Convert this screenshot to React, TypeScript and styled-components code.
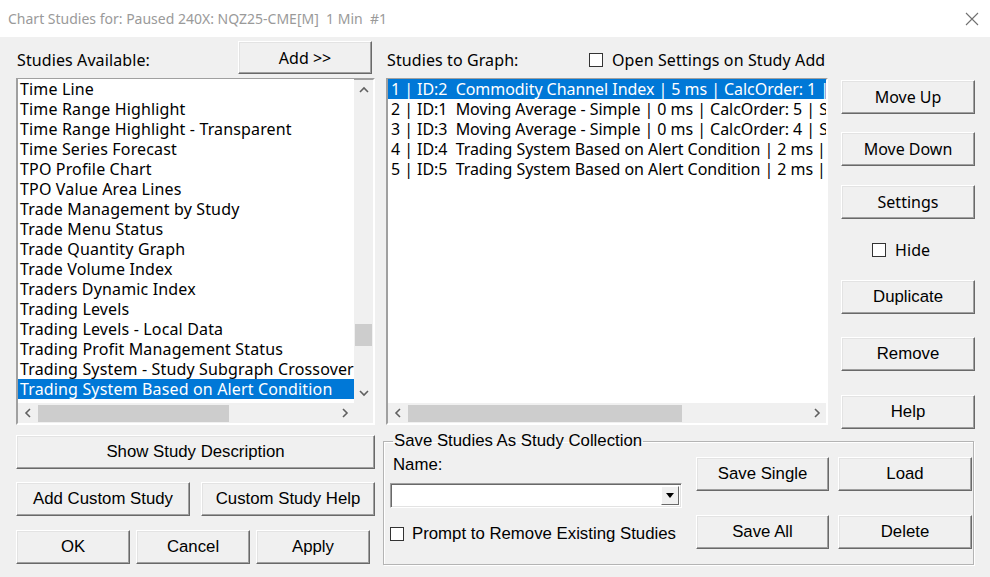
import React from "react";
import styled, { createGlobalStyle } from "styled-components";

const UI = `"Noto Sans", "Open Sans", sans-serif`;
const ARIAL = `"Liberation Sans", Arial, sans-serif`;

const GlobalStyle = createGlobalStyle`
  html, body {
    margin: 0;
    padding: 0;
    background: #f0f0f0;
  }
  * {
    box-sizing: border-box;
  }
`;

const Window = styled.div`
  width: 990px;
  height: 577px;
  background: #f0f0f0;
  font-family: ${UI};
  color: #000;
  overflow: hidden;
`;

const TitleBar = styled.div`
  height: 37px;
  background: #fff;
  display: flex;
  align-items: center;
  justify-content: space-between;
  padding: 0 11px 0 8px;
`;

const Title = styled.div`
  font-size: 14px;
  color: #9a9a9a;
  white-space: pre;
`;

const Body = styled.div`
  padding: 4px 0 0 16px;
`;

const TopRow = styled.div`
  display: flex;
  height: 388px;
`;

const Pane = styled.div<{ $width: number; $left?: number }>`
  width: ${(p) => p.$width}px;
  margin-left: ${(p) => p.$left ?? 0}px;
  display: flex;
  flex-direction: column;
`;

const PaneHeader = styled.div`
  height: 37px;
  display: flex;
  align-items: center;
`;

const MidHeader = styled.div`
  height: 37px;
  display: grid;
  grid-template-columns: 203px 1fr;
  align-items: center;
`;

const Label = styled.span`
  font-family: ${UI};
  font-size: 16px;
  letter-spacing: 0.1px;
  white-space: nowrap;
  padding-left: 1px;
`;

const Button = styled.button<{ $w?: number; $h?: number; $font?: string }>`
  width: ${(p) => (p.$w ? `${p.$w}px` : "100%")};
  height: ${(p) => p.$h ?? 34}px;
  flex-shrink: 0;
  background: #f0f0f0;
  border: 1px solid;
  border-color: #fff #696969 #696969 #fff;
  box-shadow: inset -1px -1px #a0a0a0, inset 1px 1px #e3e3e3;
  font-family: ${(p) => p.$font ?? UI};
  font-size: ${(p) => (p.$font === ARIAL ? 16.8 : 16)}px;
  color: #000;
  padding: 0;
  margin: 0;
`;

const AddButton = styled(Button)`
  margin-left: auto;
  margin-right: 3px;
  align-self: flex-start;
`;

const ListBox = styled.div<{ $vbar?: boolean }>`
  height: 347px;
  border: 2px solid;
  border-color: #a0a0a0 #fff #fff #a0a0a0;
  box-shadow: inset 1px 1px #696969, inset -1px -1px #e3e3e3;
  background: #fff;
  display: grid;
  grid-template-columns: ${(p) => (p.$vbar ? "1fr 19px" : "1fr")};
  grid-template-rows: 1fr 20px;
`;

const Items = styled.div`
  overflow: hidden;
  background: #fff;
  margin-top: -1px;
`;

const Item = styled.div<{ $selected?: boolean; $pad?: number; $spacing?: number }>`
  height: 20px;
  line-height: 20px;
  font-size: 16px;
  letter-spacing: ${(p) => p.$spacing ?? 0.15}px;
  white-space: pre;
  padding-left: ${(p) => p.$pad ?? 2}px;
  background: ${(p) => (p.$selected ? "#0078d7" : "transparent")};
  color: ${(p) => (p.$selected ? "#fff" : "#000")};
`;

const Bar = styled.div<{ $vertical?: boolean }>`
  background: #f0f0f0;
  display: flex;
  flex-direction: ${(p) => (p.$vertical ? "column" : "row")};
`;

const ArrowCell = styled.div`
  width: 19px;
  height: 20px;
  flex-shrink: 0;
  display: flex;
  align-items: center;
  justify-content: center;
`;

const Track = styled.div<{ $vertical?: boolean }>`
  flex: 1;
  display: flex;
  flex-direction: ${(p) => (p.$vertical ? "column" : "row")};
  align-items: ${(p) => (p.$vertical ? "stretch" : "center")};
`;

const Thumb = styled.div<{ $vertical?: boolean; $offset: number; $size: number }>`
  background: #cdcdcd;
  ${(p) =>
    p.$vertical
      ? `margin-top: ${p.$offset}px; height: ${p.$size}px; width: 17px; margin-left: 1px;`
      : `margin-left: ${p.$offset}px; width: ${p.$size}px; height: 17px;`}
`;

const Corner = styled.div`
  background: #f0f0f0;
`;

const Chevron = ({ dir }: { dir: "up" | "down" | "left" | "right" }) => {
  const d = {
    up: "M1 6 L5 2 L9 6",
    down: "M1 2 L5 6 L9 2",
    left: "M6 1 L2 5 L6 9",
    right: "M2 1 L6 5 L2 9",
  }[dir];
  const horiz = dir === "left" || dir === "right";
  return (
    <svg width={horiz ? 8 : 10} height={horiz ? 10 : 8} viewBox={horiz ? "0 0 8 10" : "0 0 10 8"}>
      <path d={d} fill="none" stroke="#606060" strokeWidth="1.6" />
    </svg>
  );
};

const HScroll = ({ offset, size }: { offset: number; size: number }) => (
  <Bar>
    <ArrowCell>
      <Chevron dir="left" />
    </ArrowCell>
    <Track>
      <Thumb $offset={offset} $size={size} />
    </Track>
    <ArrowCell>
      <Chevron dir="right" />
    </ArrowCell>
  </Bar>
);

const VScroll = ({ offset, size }: { offset: number; size: number }) => (
  <Bar $vertical>
    <ArrowCell>
      <Chevron dir="up" />
    </ArrowCell>
    <Track $vertical>
      <Thumb $vertical $offset={offset} $size={size} />
    </Track>
    <ArrowCell>
      <Chevron dir="down" />
    </ArrowCell>
  </Bar>
);

const CheckRow = styled.label<{ $pad?: number; $gap?: number }>`
  display: flex;
  align-items: center;
  gap: ${(p) => p.$gap ?? 8}px;
  padding-left: ${(p) => p.$pad ?? 0}px;
`;

const Box = styled.span`
  width: 14px;
  height: 14px;
  border: 1px solid #333;
  background: #fff;
  flex-shrink: 0;
`;

const RightColumn = styled.div`
  width: 134px;
  margin-left: 13px;
  padding-top: 39px;
  display: flex;
  flex-direction: column;
`;

const Spaced = styled.div<{ $top: number }>`
  margin-top: ${(p) => p.$top}px;
`;

const HideRow = styled(CheckRow)`
  height: 25px;
`;

const BottomRow = styled.div`
  display: flex;
  margin-top: 6px;
`;

const LeftBottom = styled.div`
  width: 359px;
  display: flex;
  flex-direction: column;
  gap: 13px;
`;

const ButtonRow = styled.div<{ $gap: number }>`
  display: flex;
  gap: ${(p) => p.$gap}px;
`;

const Group = styled.fieldset`
  width: 591px;
  height: 133px;
  margin: -3px 0 0 8px;
  padding: 0 0 0 6px;
  border: 1px solid #b4b4b4;
  box-shadow: 1px 1px #fff, inset 1px 1px #fff;
  display: flex;
  font-family: ${ARIAL};
  font-size: 16.8px;
  min-width: 0;
`;

const Legend = styled.legend`
  padding: 0 1px;
  margin-left: 3px;
  line-height: 18px;
`;

const GroupLeft = styled.div`
  width: 292px;
  padding-top: 6px;
  display: flex;
  flex-direction: column;
`;

const NameLabel = styled.div`
  line-height: 18px;
  padding-left: 3px;
`;

const Combo = styled.div`
  margin-top: 9px;
  height: 25px;
  flex-shrink: 0;
  background: #fff;
  border: 1px solid;
  border-color: #a0a0a0 #fff #fff #a0a0a0;
  box-shadow: inset 1px 1px #696969, inset -1px -1px #e3e3e3;
  display: flex;
  justify-content: flex-end;
  padding: 2px;
`;

const DropButton = styled.div`
  width: 18px;
  background: #f0f0f0;
  border: 1px solid;
  border-color: #fff #696969 #696969 #fff;
  display: flex;
  align-items: center;
  justify-content: center;
`;

const PromptRow = styled(CheckRow)`
  margin-top: 17px;
  height: 18px;
`;

const GroupButtons = styled.div`
  margin: 7px 0 0 14px;
  display: grid;
  grid-template-columns: 133px 134px;
  grid-auto-rows: 34px;
  column-gap: 9px;
  row-gap: 24px;
`;

const available = [
  "Time Line",
  "Time Range Highlight",
  "Time Range Highlight - Transparent",
  "Time Series Forecast",
  "TPO Profile Chart",
  "TPO Value Area Lines",
  "Trade Management by Study",
  "Trade Menu Status",
  "Trade Quantity Graph",
  "Trade Volume Index",
  "Traders Dynamic Index",
  "Trading Levels",
  "Trading Levels - Local Data",
  "Trading Profit Management Status",
  "Trading System - Study Subgraph Crossover",
  "Trading System Based on Alert Condition",
  "Trendline Alerts",
];

const graphed = [
  "1 | ID:2  Commodity Channel Index | 5 ms | CalcOrder: 1 | Subgraph",
  "2 | ID:1  Moving Average - Simple | 0 ms | CalcOrder: 5 | Subgraph",
  "3 | ID:3  Moving Average - Simple | 0 ms | CalcOrder: 4 | Subgraph",
  "4 | ID:4  Trading System Based on Alert Condition | 2 ms | CalcOrder",
  "5 | ID:5  Trading System Based on Alert Condition | 2 ms | CalcOrder",
];

export default function App() {
  return (
    <>
      <GlobalStyle />
      <Window>
        <TitleBar>
          <Title>Chart Studies for: Paused 240X: NQZ25-CME[M]  1 Min  #1</Title>
          <svg width="14" height="14" viewBox="0 0 14 14">
            <path d="M1 1 L13 13 M13 1 L1 13" stroke="#707070" strokeWidth="1.1" />
          </svg>
        </TitleBar>
        <Body>
          <TopRow>
            <Pane $width={359}>
              <PaneHeader>
                <Label>Studies Available:</Label>
                <AddButton $w={134} $h={33}>Add &gt;&gt;</AddButton>
              </PaneHeader>
              <ListBox $vbar>
                <Items>
                  {available.map((s, i) => (
                    <Item key={s} $selected={i === 15}>
                      {s}
                    </Item>
                  ))}
                </Items>
                <VScroll offset={224} size={22} />
                <HScroll offset={1} size={191} />
                <Corner />
              </ListBox>
            </Pane>
            <Pane $width={442} $left={11}>
              <MidHeader>
                <Label>Studies to Graph:</Label>
                <CheckRow $gap={8}>
                  <Box />
                  <Label>Open Settings on Study Add</Label>
                </CheckRow>
              </MidHeader>
              <ListBox>
                <Items>
                  {graphed.map((s, i) => (
                    <Item key={s} $selected={i === 0} $pad={3} $spacing={-0.05}>
                      {s}
                    </Item>
                  ))}
                </Items>
                <HScroll offset={1} size={274} />
              </ListBox>
            </Pane>
            <RightColumn>
              <Button>Move Up</Button>
              <Spaced $top={18}>
                <Button>Move Down</Button>
              </Spaced>
              <Spaced $top={19}>
                <Button>Settings</Button>
              </Spaced>
              <Spaced $top={18}>
                <HideRow $pad={31}>
                  <Box />
                  <Label>Hide</Label>
                </HideRow>
              </Spaced>
              <Spaced $top={18}>
                <Button $font={ARIAL}>Duplicate</Button>
              </Spaced>
              <Spaced $top={23}>
                <Button $font={ARIAL}>Remove</Button>
              </Spaced>
              <Spaced $top={24}>
                <Button $font={ARIAL}>Help</Button>
              </Spaced>
            </RightColumn>
          </TopRow>
          <BottomRow>
            <LeftBottom>
              <Button $font={ARIAL}>Show Study Description</Button>
              <ButtonRow $gap={11}>
                <Button $font={ARIAL} $w={174}>Add Custom Study</Button>
                <Button $font={ARIAL} $w={174}>Custom Study Help</Button>
              </ButtonRow>
              <Spaced $top={1}>
                <ButtonRow $gap={6}>
                  <Button $font={ARIAL} $w={114}>OK</Button>
                  <Button $font={ARIAL} $w={114}>Cancel</Button>
                  <Button $font={ARIAL} $w={114}>Apply</Button>
                </ButtonRow>
              </Spaced>
            </LeftBottom>
            <Group>
              <Legend>Save Studies As Study Collection</Legend>
              <GroupLeft>
                <NameLabel>Name:</NameLabel>
                <Combo>
                  <DropButton>
                    <svg width="8" height="5" viewBox="0 0 8 5">
                      <path d="M0 0 L8 0 L4 5 Z" fill="#000" />
                    </svg>
                  </DropButton>
                </Combo>
                <PromptRow $gap={8}>
                  <Box />
                  <span>Prompt to Remove Existing Studies</span>
                </PromptRow>
              </GroupLeft>
              <GroupButtons>
                <Button $font={ARIAL}>Save Single</Button>
                <Button $font={ARIAL}>Load</Button>
                <Button $font={ARIAL}>Save All</Button>
                <Button $font={ARIAL}>Delete</Button>
              </GroupButtons>
            </Group>
          </BottomRow>
        </Body>
      </Window>
    </>
  );
}
